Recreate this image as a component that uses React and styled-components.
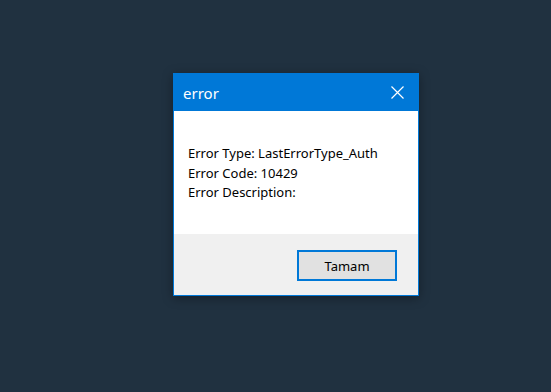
import React from 'react'
import styled, { createGlobalStyle } from 'styled-components'

const GlobalStyle = createGlobalStyle`
    html, body {
        margin: 0;
        background-color: #203140;
    }
    body {
        font-family: "Noto Sans", "Open Sans", sans-serif;
    }
`;

const Screen = styled.div`
    width: 551px;
    height: 392px;
    padding: 73px 0 0 173px;
    box-sizing: border-box;
`;

const Dialog = styled.div`
    width: 246px;
    height: 223px;
    box-sizing: border-box;
    border: 1px solid #0078d7;
    display: flex;
    flex-direction: column;
    background-color: #ffffff;
    box-shadow: 0 2px 10px rgba(0, 0, 0, 0.35);
`;

const TitleBar = styled.div`
    height: 37px;
    flex-shrink: 0;
    background-color: #0078d7;
    display: flex;
    align-items: center;
    justify-content: space-between;
    padding: 0 14px 0 9px;
`;

const Title = styled.span`
    color: #ffffff;
    font-size: 15px;
`;

const CloseButton = styled.svg`
    width: 13px;
    height: 13px;
    display: block;
`;

const Body = styled.div`
    flex: 1;
    padding: 33px 14px 0 14px;
    color: #000000;
    font-size: 13px;
    line-height: 19.5px;
`;

const Line = styled.div`
    white-space: nowrap;
`;

const Footer = styled.div`
    height: 61px;
    flex-shrink: 0;
    background-color: #f0f0f0;
    display: flex;
    justify-content: flex-end;
    align-items: flex-start;
    padding: 16px 21px 0 0;
    box-sizing: border-box;
`;

const Button = styled.button`
    width: 100px;
    height: 31px;
    box-sizing: border-box;
    border: 2px solid #0078d7;
    background-color: #e1e1e1;
    font-family: "Noto Sans", "Open Sans", sans-serif;
    font-size: 13px;
    color: #000000;
    padding: 0;
`;

const App = () => {
    return (
        <Screen>
            <GlobalStyle />
            <Dialog>
                <TitleBar>
                    <Title>error</Title>
                    <CloseButton viewBox="0 0 13 13">
                        <path d="M0.5 0.5 L12.5 12.5 M12.5 0.5 L0.5 12.5" stroke="#ffffff" strokeWidth="1.2" />
                    </CloseButton>
                </TitleBar>
                <Body>
                    <Line>Error Type: LastErrorType_Auth</Line>
                    <Line>Error Code: 10429</Line>
                    <Line>Error Description:</Line>
                </Body>
                <Footer>
                    <Button>Tamam</Button>
                </Footer>
            </Dialog>
        </Screen>
    );
};

export default App;
